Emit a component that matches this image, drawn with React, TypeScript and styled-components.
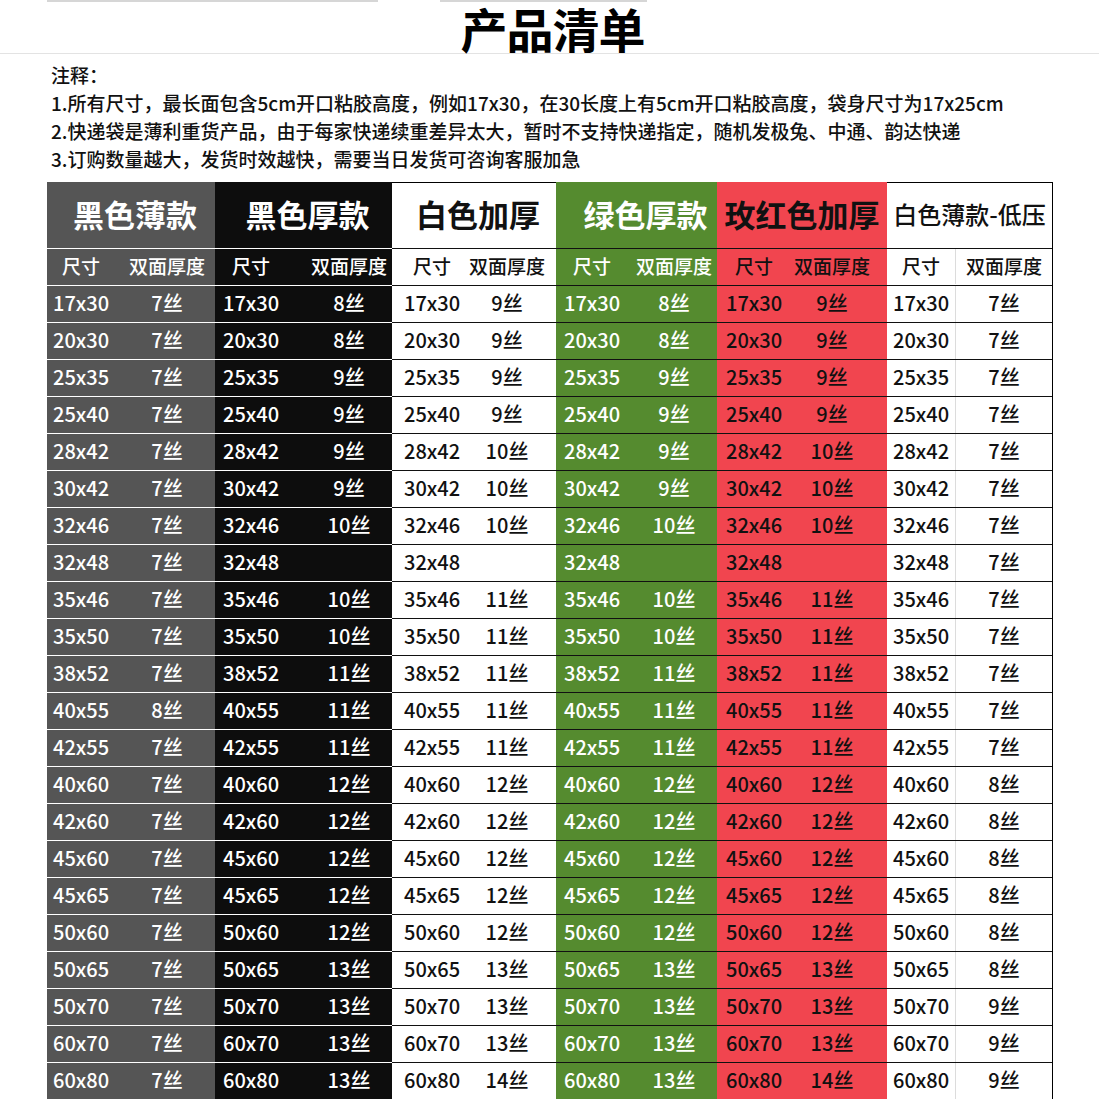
import React from "react";
import styled, { createGlobalStyle } from "styled-components";

const GlobalStyle = createGlobalStyle`
  html, body { margin: 0; padding: 0; background: #ffffff; }
  body {
    font-family: "Noto Sans CJK SC", "Noto Sans", "Liberation Sans", sans-serif;
    color: #111111;
  }
`;

const Page = styled.div`
  width: 1099px;
  height: 1099px;
  overflow: hidden;
  background: #ffffff;
`;

const TopDeco = styled.div`
  display: flex;
  gap: 62px;
  height: 2px;
  padding-left: 47px;
`;

const DecoLine = styled.div<{ $w: number }>`
  width: ${(p) => p.$w}px;
  background: #d6d6d6;
`;

const Title = styled.h1`
  margin: 0;
  border-bottom: 1px solid #e3e3e3;
  text-align: center;
  padding-left: 6px;
  font-size: 47px;
  line-height: 51px;
  font-weight: 700;
  letter-spacing: -1px;
  color: #000000;
`;

const Notes = styled.div`
  padding: 7px 0 0 51px;
  font-size: 19px;
  line-height: 28px;
  font-weight: 500;
  color: #111111;
`;

const NoteLine = styled.div`
  white-space: nowrap;
`;

const Table = styled.div`
  display: flex;
  margin: 9px 0 0 47px;
`;

const Group = styled.div<{ $w: number; $bg: string; $fg: string; $top?: boolean; $right?: boolean }>`
  width: ${(p) => p.$w}px;
  background: ${(p) => p.$bg};
  color: ${(p) => p.$fg};
  box-sizing: border-box;
  display: flex;
  flex-direction: column;
  border-top: ${(p) => (p.$top ? "1px solid #000" : "1px solid transparent")};
  border-right: ${(p) => (p.$right ? "1px solid #000" : "none")};
`;

const GroupHead = styled.div<{ $size: number; $weight: number; $shift: number }>`
  height: 65px;
  box-sizing: border-box;
  display: flex;
  align-items: center;
  justify-content: center;
  padding-left: ${(p) => p.$shift}px;
  padding-bottom: 5px;
  font-size: ${(p) => p.$size}px;
  font-weight: ${(p) => p.$weight};
  white-space: nowrap;
`;

const Row = styled.div<{ $line: string; $sizeW: number }>`
  display: grid;
  grid-template-columns: ${(p) => p.$sizeW}px 1fr;
  height: 37px;
  box-sizing: border-box;
  padding-bottom: 2px;
  border-top: 1px solid ${(p) => p.$line};
  font-size: 20px;
  font-weight: 500;
  line-height: 1;
  white-space: nowrap;
`;

const SubRow = styled(Row)`
  font-size: 19px;
  padding-bottom: 3px;
`;

const SizeCell = styled.div<{ $pad: number }>`
  display: flex;
  align-items: center;
  padding-left: ${(p) => p.$pad}px;
`;

const ThickCell = styled.div<{ $sep?: boolean }>`
  display: flex;
  align-items: center;
  justify-content: center;
  border-left: ${(p) => (p.$sep ? "1px solid #dcdcdc" : "none")};
  margin-bottom: ${(p) => (p.$sep ? "-2px" : "0")};
  padding-bottom: ${(p) => (p.$sep ? "2px" : "0")};
`;

type GroupDef = {
  name: string;
  w: number;
  sizeW: number;
  pad: number;
  bg: string;
  fg: string;
  line: string;
  top?: boolean;
  right?: boolean;
  sep?: boolean;
  headSize: number;
  headWeight: number;
  shift: number;
  vals: (number | null)[];
};

const sizes = [
  "17x30", "20x30", "25x35", "25x40", "28x42", "30x42", "32x46", "32x48",
  "35x46", "35x50", "38x52", "40x55", "42x55", "40x60", "42x60", "45x60",
  "45x65", "50x60", "50x65", "50x70", "60x70", "60x80",
];

const thickA = [8, 8, 9, 9, 9, 9, 10, null, 10, 10, 11, 11, 11, 12, 12, 12, 12, 12, 13, 13, 13, 13];
const thickB = [9, 9, 9, 9, 10, 10, 10, null, 11, 11, 11, 11, 11, 12, 12, 12, 12, 12, 13, 13, 13, 14];
const thickGray = sizes.map((s) => (s === "40x55" ? 8 : 7));
const thickLow = [7, 7, 7, 7, 7, 7, 7, 7, 7, 7, 7, 7, 7, 8, 8, 8, 8, 8, 8, 9, 9, 9];

const groups: GroupDef[] = [
  { name: "黑色薄款", w: 168, sizeW: 72, pad: 6, bg: "#555555", fg: "#ffffff", line: "#ffffff", headSize: 31, headWeight: 700, shift: 8, vals: thickGray },
  { name: "黑色厚款", w: 177, sizeW: 91, pad: 8, bg: "#0d0d0d", fg: "#ffffff", line: "#ffffff", headSize: 31, headWeight: 700, shift: 8, vals: thickA },
  { name: "白色加厚", w: 164, sizeW: 66, pad: 12, bg: "#ffffff", fg: "#111111", line: "#111111", top: true, headSize: 31, headWeight: 700, shift: 8, vals: thickB },
  { name: "绿色厚款", w: 161, sizeW: 75, pad: 8, bg: "#558b2f", fg: "#ffffff", line: "#111111", headSize: 31, headWeight: 700, shift: 18, vals: thickA },
  { name: "玫红色加厚", w: 170, sizeW: 60, pad: 9, bg: "#f1454f", fg: "#111111", line: "#111111", headSize: 31, headWeight: 700, shift: 0, vals: thickB },
  { name: "白色薄款-低压", w: 166, sizeW: 68, pad: 6, bg: "#ffffff", fg: "#111111", line: "#111111", top: true, right: true, sep: true, headSize: 24, headWeight: 500, shift: 0, vals: thickLow },
];

export default function App() {
  return (
    <Page>
      <GlobalStyle />
      <TopDeco>
        <DecoLine $w={331} />
        <DecoLine $w={207} />
      </TopDeco>
      <Title>产品清单</Title>
      <Notes>
        <NoteLine>注释：</NoteLine>
        <NoteLine>1.所有尺寸，最长面包含5cm开口粘胶高度，例如17x30，在30长度上有5cm开口粘胶高度，袋身尺寸为17x25cm</NoteLine>
        <NoteLine>2.快递袋是薄利重货产品，由于每家快递续重差异太大，暂时不支持快递指定，随机发极兔、中通、韵达快递</NoteLine>
        <NoteLine>3.订购数量越大，发货时效越快，需要当日发货可咨询客服加急</NoteLine>
      </Notes>
      <Table>
        {groups.map((g) => (
          <Group key={g.name} $w={g.w} $bg={g.bg} $fg={g.fg} $top={g.top} $right={g.right}>
            <GroupHead $size={g.headSize} $weight={g.headWeight} $shift={g.shift}>
              {g.name}
            </GroupHead>
            <SubRow $line={g.line} $sizeW={g.sizeW}>
              <SizeCell $pad={g.pad + 9}>尺寸</SizeCell>
              <ThickCell $sep={g.sep}>双面厚度</ThickCell>
            </SubRow>
            {sizes.map((s, i) => (
              <Row key={s + i} $line={g.line} $sizeW={g.sizeW}>
                <SizeCell $pad={g.pad}>{s}</SizeCell>
                <ThickCell $sep={g.sep}>{g.vals[i] !== null ? `${g.vals[i]}丝` : ""}</ThickCell>
              </Row>
            ))}
          </Group>
        ))}
      </Table>
    </Page>
  );
}
